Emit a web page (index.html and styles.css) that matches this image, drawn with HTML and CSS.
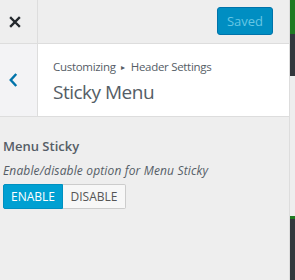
FILE: index.html
```html
<!DOCTYPE html>
<html lang="en">
<head>
  <meta charset="UTF-8" />
  <title>Customizer - Sticky Menu</title>
  <link rel="stylesheet" href="styles.css">
</head>
<body>

<div class="sidebar">
  <div class="topbar">
    <div class="close-btn">
      <svg width="12" height="12" viewBox="0 0 12 12">
        <path d="M2 2 L10 10 M10 2 L2 10" stroke="#23282d" stroke-width="2.4" stroke-linecap="square"/>
      </svg>
    </div>
    <div class="topbar-right">
      <button class="save-btn" disabled>Saved</button>
    </div>
  </div>

  <div class="section-head">
    <div class="back-btn">
      <svg width="10" height="14" viewBox="0 0 10 14">
        <path d="M7.5 1.5 L2.5 7 L7.5 12.5" fill="none" stroke="#0073aa" stroke-width="2.2"/>
      </svg>
    </div>
    <div class="section-title">
      <div class="crumbs">Customizing <span class="arrow">&#9656;</span> Header Settings</div>
      <h2>Sticky Menu</h2>
    </div>
  </div>

  <div class="control">
    <div class="control-title">Menu Sticky</div>
    <div class="control-desc">Enable/disable option for Menu Sticky</div>
    <div class="switch">
      <button class="switch-btn active">ENABLE</button>
      <button class="switch-btn">DISABLE</button>
    </div>
  </div>
</div>

<div class="edge">
  <div class="edge-green"></div>
  <div class="edge-dark"></div>
  <div class="edge-light"></div>
  <div class="edge-green small"></div>
  <div class="edge-dark fill"></div>
</div>

</body>
</html>
```

FILE: styles.css
```css
body {
  margin: 0;
  padding: 0;
  font-family: "Open Sans", Arial, sans-serif;
  display: flex;
  height: 280px;
  overflow: hidden;
  background-color: #eee;
}
.sidebar {
  width: 289px;
  height: 280px;
  background-color: #eee;
  border-right: 1px solid #ddd;
  display: flex;
  flex-direction: column;
}
.topbar {
  height: 43px;
  display: flex;
  border-bottom: 1px solid #ddd;
}
.close-btn {
  width: 38px;
  border-right: 1px solid #ddd;
  display: flex;
  align-items: center;
  justify-content: center;
  padding-right: 8px;
  box-sizing: border-box;
}
.topbar-right {
  flex: 1;
  display: flex;
  justify-content: flex-end;
  align-items: flex-start;
  padding: 7px 16px 0 0;
}
.save-btn {
  width: 56px;
  height: 28px;
  background-color: #008ec2;
  border: 1px solid #0073aa;
  border-radius: 3px;
  color: #66c6e4;
  font-family: "Open Sans", Arial, sans-serif;
  font-size: 13px;
  padding: 0;
}
.section-head {
  height: 72px;
  display: flex;
  background-color: #fff;
  border-bottom: 1px solid #ddd;
}
.back-btn {
  width: 38px;
  background-color: #f3f3f5;
  border-right: 1px solid #ddd;
  display: flex;
  align-items: center;
  justify-content: center;
  padding-right: 10px;
  box-sizing: border-box;
}
.back-btn svg {
  width: 11px;
  height: 16px;
}
.section-title {
  padding: 13px 0 0 15px;
  color: #555d66;
}
.crumbs {
  font-size: 11.5px;
  line-height: 20px;
  letter-spacing: -0.3px;
}
.arrow {
  font-size: 8px;
  margin: 0 3px;
  vertical-align: 1px;
}
.section-title h2 {
  margin: 2px 0 0;
  font-size: 19px;
  font-weight: 400;
  line-height: 26px;
  letter-spacing: -0.5px;
}
.control {
  padding: 19px 3px 0;
  color: #555d66;
}
.control-title {
  font-size: 13px;
  font-weight: 600;
  line-height: 20px;
}
.control-desc {
  font-size: 12px;
  font-style: italic;
  line-height: 18px;
  margin-top: 6px;
  letter-spacing: 0.15px;
}
.switch {
  display: flex;
  margin-top: 4px;
}
.switch-btn {
  height: 25px;
  border: 1px solid #ccc;
  background-color: #f7f7f7;
  color: #555;
  font-family: "Open Sans", Arial, sans-serif;
  font-size: 12px;
  padding: 0;
  box-sizing: border-box;
  width: 63px;
}
.switch-btn.active {
  width: 60px;
  background-color: #00a0d2;
  border-color: #0090c0;
  color: #fff;
  border-radius: 2px 0 0 2px;
}
.switch-btn:last-child {
  border-left: none;
  border-radius: 0 2px 2px 0;
}
.edge {
  width: 5px;
  display: flex;
  flex-direction: column;
}
.edge-green {
  height: 34px;
  background-color: #1f7a22;
}
.edge-green.small {
  height: 3px;
}
.edge-dark {
  height: 42px;
  background-color: #32373c;
}
.edge-dark.fill {
  flex: 1;
}
.edge-light {
  height: 140px;
  background-color: #eee;
}
```
